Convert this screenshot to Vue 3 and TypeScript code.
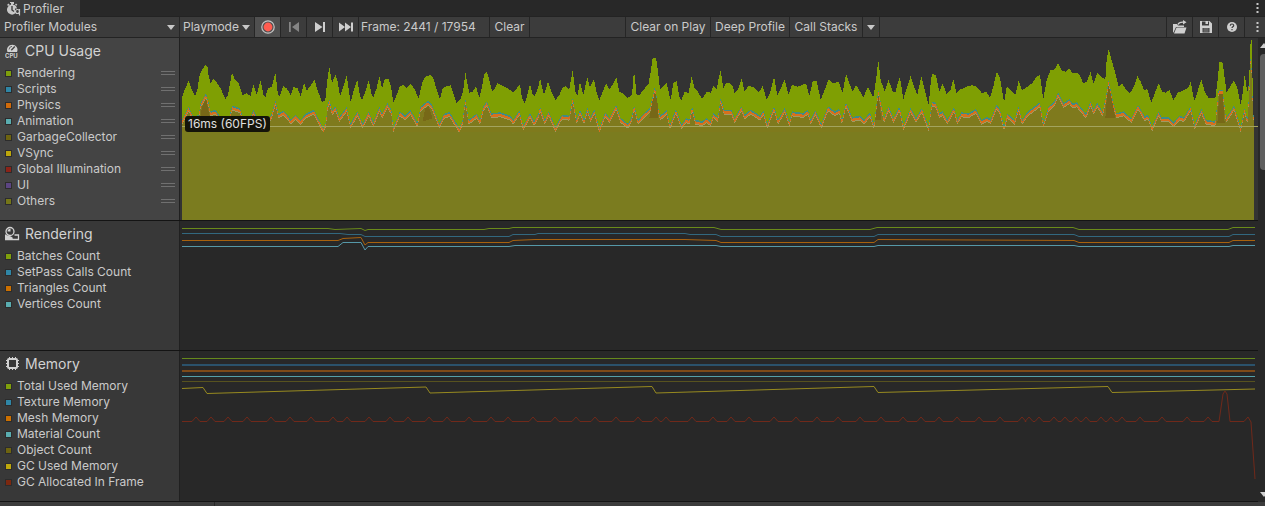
<script setup lang="ts">
import { ref } from 'vue'

interface Series {
  name: string
  color: string
  enabled: boolean
}

interface Line {
  color: string
  width: number
  points: string
}

const playMode = ref('Playmode')
const moduleMenu = ref('Profiler Modules')
const recording = ref(true)

const cpuSeries = ref<Series[]>([
  { name: 'Rendering', color: '#7f9f0c', enabled: true },
  { name: 'Scripts', color: '#2f86a6', enabled: true },
  { name: 'Physics', color: '#d06a0a', enabled: true },
  { name: 'Animation', color: '#5aadb0', enabled: true },
  { name: 'GarbageCollector', color: '#6e6410', enabled: true },
  { name: 'VSync', color: '#bda70c', enabled: true },
  { name: 'Global Illumination', color: '#8c2318', enabled: true },
  { name: 'UI', color: '#5c4583', enabled: true },
  { name: 'Others', color: '#757618', enabled: true },
])

const renderingSeries = ref<Series[]>([
  { name: 'Batches Count', color: '#7f9f0c', enabled: true },
  { name: 'SetPass Calls Count', color: '#2f86a6', enabled: true },
  { name: 'Triangles Count', color: '#cc7000', enabled: true },
  { name: 'Vertices Count', color: '#5aadb0', enabled: true },
])

const memorySeries = ref<Series[]>([
  { name: 'Total Used Memory', color: '#7f9f0c', enabled: true },
  { name: 'Texture Memory', color: '#2f86a6', enabled: true },
  { name: 'Mesh Memory', color: '#cc7000', enabled: true },
  { name: 'Material Count', color: '#5aadb0', enabled: true },
  { name: 'Object Count', color: '#6e6410', enabled: true },
  { name: 'GC Used Memory', color: '#bda70c', enabled: true },
  { name: 'GC Allocated In Frame', color: '#7c2810', enabled: true },
])

/* CPU samples are recorded in three blocks; x and y are thirds of a pixel. */
const blockStarts = [0, 1080, 2160]

const totalBlocks = [
  '6,172 14,150 26,122 36,150 46,168 52,150 58,108 66,90 76,76 82,78 86,108 92,132 100,115 110,128 122,145 136,178 144,165 150,130 156,98 164,118 176,130 188,165 200,160 212,168 220,132 230,165 242,120 250,165 256,172 264,145 276,140 286,97 294,165 300,168 310,138 320,145 332,165 340,142 352,143 362,168 372,128 380,152 390,140 404,118 412,150 420,170 426,188 436,180 442,120 448,80 456,130 466,104 472,120 480,168 490,140 500,106 508,160 512,186 520,155 532,120 540,168 546,180 556,155 566,120 574,160 580,172 590,145 598,108 606,145 614,118 626,116 634,145 640,188 650,165 660,138 670,135 680,145 692,132 704,148 716,176 726,130 736,110 750,105 760,115 770,150 780,178 788,145 800,138 812,136 822,165 830,190 842,178 850,150 856,97 864,140 868,158 878,155 888,140 898,172 906,140 912,105 920,95 928,120 936,155 944,145 952,130 970,138 984,145 1000,158 1010,145 1020,135 1026,175 1034,190 1042,165 1050,132 1058,165 1064,168 1074,145',
  '0,115 12,165 24,125 36,160 46,180 58,165 66,145 76,138 88,148 98,90 106,155 112,168 120,125 130,165 142,112 150,142 162,117 170,158 178,182 190,150 198,130 208,148 220,130 229,112 238,155 248,160 262,175 276,165 282,90 290,165 298,165 310,150 326,130 332,95 338,54 348,54 354,95 360,148 380,130 388,165 392,180 400,130 410,122 418,170 424,182 434,155 446,160 455,108 464,145 474,155 486,178 500,155 512,158 520,138 530,148 536,115 542,92 550,145 558,130 566,128 578,140 584,160 594,150 605,115 614,155 626,136 640,142 656,158 668,138 680,178 690,160 702,110 712,165 722,145 734,120 746,165 756,135 774,140 798,130 808,168 818,125 830,122 842,180 854,150 866,118 880,130 896,125 908,158 918,102 928,130 938,155 948,135 962,158 970,172 984,140 1000,172 1008,120 1015,62 1022,120 1034,155 1046,120 1058,155 1066,158 1076,120',
  '0,112 10,178 20,145 32,108 42,140 52,165 64,108 74,150 86,195 92,130 96,102 108,105 118,155 128,130 140,162 152,148 160,118 170,160 182,148 200,140 216,136 230,140 246,160 258,155 270,172 280,140 290,96 300,112 306,150 312,188 320,140 332,150 346,165 356,122 366,150 380,142 396,130 410,110 420,105 426,150 430,178 440,120 452,90 464,88 474,68 486,92 498,95 508,85 518,100 532,98 540,108 550,130 560,125 572,95 580,132 592,98 604,110 616,120 620,60 626,28 636,65 646,100 656,140 666,130 676,145 690,160 702,140 712,108 722,125 732,150 742,148 754,188 764,160 776,130 786,155 796,158 808,150 820,180 834,158 852,150 866,142 872,124 880,170 884,182 894,150 904,118 914,155 926,175 946,174 952,130 958,66 968,68 974,115 980,158 990,140 1002,122 1012,145 1022,195 1028,160 1034,105 1042,155 1047,130 1052,0 1055,0 1059,180 1063,345',
]

const scriptBlocks = [
  '6,240 26,200 40,232 56,225 62,190 78,160 86,190 92,215 106,210 116,225 136,250 150,225 156,198 180,205 188,232 210,238 220,210 234,240 262,238 274,225 286,183 296,222 310,212 322,225 332,240 346,225 362,240 378,222 402,210 414,235 430,265 438,245 442,200 448,178 456,212 466,200 478,232 500,202 512,252 532,215 548,252 566,215 580,248 598,202 606,222 622,190 634,210 640,262 660,215 676,228 692,212 712,248 722,200 744,183 756,195 778,252 792,222 808,217 838,265 848,240 856,178 866,240 890,222 900,240 910,200 920,185 934,220 960,218 990,228 1000,240 1018,212 1030,258 1050,220 1062,245 1076,220',
  '0,200 14,240 26,215 46,262 66,225 88,228 98,175 110,238 120,210 132,240 142,205 152,232 163,210 178,265 196,218 208,235 228,195 242,235 264,252 276,230 282,195 294,240 310,222 330,205 345,140 354,200 360,228 380,212 390,255 408,208 424,255 438,235 448,240 456,200 466,240 486,245 500,235 512,245 520,220 534,232 542,175 552,210 574,210 584,235 604,200 614,225 632,210 660,228 670,212 682,252 702,200 714,240 734,205 748,245 756,215 790,220 804,210 812,240 826,212 844,252 864,200 884,215 898,208 906,240 918,188 936,232 960,228 972,240 990,218 1002,255 1015,150 1032,235 1046,200 1060,235 1076,205',
  '0,205 10,258 32,205 48,235 66,205 76,235 86,260 96,185 108,190 118,220 128,215 142,240 162,202 172,240 184,218 206,220 228,208 244,240 260,232 272,238 290,195 300,210 312,260 322,222 344,240 356,200 366,240 384,215 420,188 430,250 446,200 464,185 474,158 490,190 508,178 518,192 530,188 558,222 572,185 580,210 592,190 608,215 618,170 626,120 640,190 650,220 670,215 694,235 714,195 734,230 744,225 756,262 776,215 784,232 804,232 820,248 838,228 852,232 872,200 884,255 904,208 918,240 946,245 956,150 968,150 978,235 1002,198 1022,262 1034,205 1042,240 1048,150 1053,20 1056,150 1060,200 1063,345',
]

function stackedArea(blocks: string[], drop: number): string {
  const points = blocks.flatMap((block, i) =>
    block.split(' ').map((pair) => {
      const [x, y] = pair.split(',').map(Number)
      return `${x + blockStarts[i]},${y + drop}`
    }),
  )
  return `6,540 ${points.join(' ')} 3223,540`
}

const cpuLayers = [
  { fill: '#7f9f03', points: stackedArea(totalBlocks, 0) },
  { fill: '#3f8c86', points: stackedArea(scriptBlocks, -1) },
  { fill: '#d8701c', points: stackedArea(scriptBlocks, 4) },
  { fill: '#a09a62', points: stackedArea(scriptBlocks, 11) },
  { fill: '#7f7a1d', points: stackedArea(scriptBlocks, 14) },
]

const collectorSpikes = [
  '62,230 66,200 78,176 84,205 92,240',
  '728,245 736,205 746,198 758,235',
  '1408,235 1416,190 1425,156 1433,190 1434,235',
  '2776,235 2780,180 2786,136 2796,180 2806,235',
  '3112,250 3118,162 3128,162 3134,250',
  '2086,240 2095,162 2104,240',
]

const renderingLines: Line[] = [
  { color: '#6a8a1a', width: 1, points: '2,7.5 148,7.5 155,8.5 181,7.5 185,9.5 188,8.5 304,8.5 309,7.5 329,7.5 333,6.5 534,6.5 541,8.5 690,8.5 697,6.5 893,6.5 899,8.5 1048,8.5 1053,6.5 1075,6.5' },
  { color: '#32687f', width: 1, points: '2,12.5 160,12.5 168,13.5 181,13.5 185,15.5 329,15.5 333,13.5 355,13.5 358,12.5 505,12.5 510,13.5 536,13.5 541,15.5 694,15.5 698,13.5 894,13.5 899,15.5 1049,15.5 1053,13.5 1075,13.5' },
  { color: '#a8620e', width: 1, points: '2,19.5 158,19.5 163,17.5 181,16.5 185,24 188,21.5 329,21.5 333,19.5 355,18.5 505,18.5 536,19.5 541,21.5 694,21.5 698,18.5 894,19.5 899,21.5 1049,21.5 1053,19.5 1075,19.5' },
  { color: '#5598a8', width: 1, points: '2,25.5 158,25.5 163,21.5 181,21.5 185,29 188,25.5 329,25.5 335,24.5 536,24.5 541,25.5 694,25.5 698,24.5 894,24.5 899,25.5 1049,25.5 1053,24.5 1075,24.5' },
]

const allocationTicks = [
  16, 31, 48, 67, 91, 110, 131, 153, 167, 189, 210, 228, 249, 267, 289, 311, 328, 353, 375, 396, 415, 436, 458, 476,
  486, 512, 533, 551, 569, 594, 616, 637, 658, 680, 701, 723, 741, 759, 777, 799, 820, 842, 849, 859, 874, 885, 896,
  906, 921, 931, 942, 960, 982, 1007, 1028,
]

const allocationPoints = [
  '2,70.5',
  ...allocationTicks.map((x) => `${x - 4},70.5 ${x},66 ${x + 4},70.5`),
  '1039,70.5 1043,43 1045,40 1047,43 1050,70.5 1064,70.5 1068,66 1071,71 1075,128',
].join(' ')

const memoryLines: Line[] = [
  { color: '#66891c', width: 1, points: '2,7.5 1075,7.5' },
  { color: '#2b526b', width: 2, points: '2,14 1075,14' },
  { color: '#7e4a18', width: 2, points: '2,20 1075,20' },
  { color: '#54a0aa', width: 1, points: '2,25.5 1075,25.5' },
  { color: '#57521f', width: 1, points: '2,30.5 1075,30.5' },
  { color: '#978a20', width: 1, points: '2,37.5 23,36.5 27,42.5 246,36 250,42 472,35.5 476,42 694,35.5 698,41.5 928,35.5 932,41.5 1075,38' },
  { color: '#70291a', width: 1, points: allocationPoints },
]

const modules = ref([
  { id: 'cpu', title: 'CPU Usage', series: cpuSeries.value, draggable: true },
  { id: 'rendering', title: 'Rendering', series: renderingSeries.value, draggable: false },
  { id: 'memory', title: 'Memory', series: memorySeries.value, draggable: false },
])
</script>

<template>
  <main class="profiler">
    <header class="tabs">
      <button class="tab" type="button">
        <svg class="tab-icon" width="15" height="14" viewBox="0 0 15 14" aria-hidden="true">
          <path d="M4 0h4v2h-1v1h-2v-2h-1z" fill="#c8c8c8" />
          <path d="M1 3l1.500-1.500 1.200 1.200-1.400 1.400zM9 2.500l1-1 1.300 1.300-1 1z" fill="#c8c8c8" />
          <path d="M6 2.600a5 5 0 1 0 3 9v-5h2a5 5 0 0 0-5-4z" fill="#c8c8c8" />
          <path d="M6 4v4l2 1.500" fill="none" stroke="#3c3c3c" stroke-width="1.400" />
          <circle cx="11.500" cy="9.500" r="2" fill="#3c3c3c" stroke="#c8c8c8" stroke-width="1.200" />
          <path d="M13.500 7v6.500" stroke="#c8c8c8" stroke-width="1.200" />
        </svg>
        <span>Profiler</span>
      </button>
      <button class="more" type="button" aria-label="Window options">
        <svg width="3" height="11" viewBox="0 0 3 11" aria-hidden="true">
          <path d="M.5 0h2v2h-2zM.5 4h2v2h-2zM.5 8h2v2h-2z" fill="#c8c8c8" />
        </svg>
      </button>
    </header>

    <nav class="toolbar" aria-label="Profiler controls">
      <label class="picker modules-picker">
        <select v-model="moduleMenu" aria-label="Profiler modules">
          <option>Profiler Modules</option>
        </select>
        <i class="caret"></i>
      </label>
      <label class="picker mode-picker">
        <select v-model="playMode" aria-label="Target">
          <option>Playmode</option>
          <option>Editmode</option>
        </select>
        <i class="caret"></i>
      </label>
      <button class="tool" :class="{ active: recording }" type="button" aria-label="Record" @click="recording = !recording">
        <svg width="14" height="14" viewBox="0 0 14 14" aria-hidden="true">
          <circle cx="7" cy="7" r="6.200" fill="none" stroke="#c4c4c4" stroke-width="1.200" />
          <circle cx="7" cy="7" r="4.400" fill="#ff5c50" />
        </svg>
      </button>
      <button class="tool" type="button" aria-label="Previous frame" disabled>
        <svg width="12" height="12" viewBox="0 0 12 12" aria-hidden="true">
          <path d="M1 1h1.800v10h-1.800zM11 1v10l-7-5z" fill="#858585" />
        </svg>
      </button>
      <button class="tool" type="button" aria-label="Next frame">
        <svg width="12" height="12" viewBox="0 0 12 12" aria-hidden="true">
          <path d="M1 1l7.500 5-7.500 5zM9 1h2v10h-2z" fill="#cfcfcf" />
        </svg>
      </button>
      <button class="tool" type="button" aria-label="Current frame">
        <svg width="16" height="12" viewBox="0 0 16 12" aria-hidden="true">
          <path d="M1 1.500l6 4.500-6 4.500zM7 1.500l6 4.500-6 4.500zM13 1.500h2v9h-2z" fill="#cfcfcf" />
        </svg>
      </button>
      <span class="frame">Frame: 2441 / 17954</span>
      <button class="text-tool clear" type="button">Clear</button>
      <span class="gap"></span>
      <button class="text-tool clear-on-play" type="button">Clear on Play</button>
      <button class="text-tool deep" type="button">Deep Profile</button>
      <button class="text-tool stacks" type="button">Call Stacks</button>
      <button class="stacks-menu" type="button" aria-label="Call stack options"><i class="caret"></i></button>
      <span class="fill"></span>
      <button class="tool" type="button" aria-label="Load profile">
        <svg width="15" height="14" viewBox="0 0 15 14" aria-hidden="true">
          <path d="M1 4h4l1 1.500h6v1.500h-8l-2.500 5.500h-.5z" fill="#cfcfcf" />
          <path d="M4.500 7.500h10l-2 6h-10.500z" fill="#cfcfcf" />
          <path d="M6 4.500c1-2.500 3-2.500 6-2.200" fill="none" stroke="#cfcfcf" stroke-width="1.300" />
          <path d="M11 0l3.500 2.300-3.500 2.300z" fill="#cfcfcf" />
        </svg>
      </button>
      <button class="tool" type="button" aria-label="Save profile">
        <svg width="14" height="14" viewBox="0 0 14 14" aria-hidden="true">
          <path fill-rule="evenodd" d="M1 1h9.500l2.500 2.500v9.500h-12zM3 1.500v4h7v-4h-1v2.500h-2.500v-2.500zM3.500 8v4.500h7v-4.500z" fill="#cfcfcf" />
          <path d="M4.500 9h5M4.500 11h5" stroke="#8c8c8c" />
        </svg>
      </button>
      <button class="tool" type="button" aria-label="Help">
        <svg width="12" height="12" viewBox="0 0 12 12" aria-hidden="true">
          <circle cx="6" cy="6" r="5" fill="#cfcfcf" />
          <path d="M4.300 4.700c0-2.300 3.400-2.200 3.400-.2 0 1.300-1.700 1.200-1.700 2.500" fill="none" stroke="#3c3c3c" stroke-width="1.200" />
          <path d="M5.400 8h1.200v1.200h-1.200z" fill="#3c3c3c" />
        </svg>
      </button>
      <button class="more toolbar-more" type="button" aria-label="Profiler options">
        <svg width="3" height="11" viewBox="0 0 3 11" aria-hidden="true">
          <path d="M.5 0h2v2h-2zM.5 4h2v2h-2zM.5 8h2v2h-2z" fill="#c8c8c8" />
        </svg>
      </button>
    </nav>

    <div class="body">
      <div class="modules">
        <section v-for="module in modules" :key="module.id" class="module" :class="module.id">
          <div class="legend">
            <h2>
              <svg v-if="module.id === 'cpu'" width="15" height="15" viewBox="0 0 15 15" aria-hidden="true">
                <path d="M2.500 9a5.200 5.200 0 1 1 9.500 0z" fill="#d2d2d2" />
                <path d="M6.300 7.200l3.500-3.700" stroke="#444" stroke-width="1.400" />
                <path d="M4 6.500a3.500 3.500 0 0 1 3-3.200" fill="none" stroke="#444" stroke-width=".8" />
                <text x="0" y="15" class="icon-text">CPU</text>
              </svg>
              <svg v-else-if="module.id === 'rendering'" width="15" height="15" viewBox="0 0 15 15" aria-hidden="true">
                <circle cx="5" cy="5.500" r="4" fill="none" stroke="#d2d2d2" stroke-width="1.300" />
                <path d="M2.500 5.500a3 3 0 0 1 3-2.800v2.800z" fill="#d2d2d2" />
                <path d="M.5 8.500v5h13v-4.500h-4" fill="none" stroke="#d2d2d2" stroke-width="1.300" />
                <path d="M1 9l5 1.500 2 1.500-1 1.500h-6z" fill="#d2d2d2" />
              </svg>
              <svg v-else width="15" height="15" viewBox="0 0 15 15" aria-hidden="true">
                <rect x="3" y="3" width="9" height="9" rx="1" fill="none" stroke="#d2d2d2" stroke-width="2" />
                <path d="M4.500 1v2M7.500 1v2M10.500 1v2M4.500 12v2M7.500 12v2M10.500 12v2M1 4.500h2M1 7.500h2M1 10.500h2M12 4.500h2M12 7.500h2M12 10.500h2" stroke="#d2d2d2" />
              </svg>
              <span>{{ module.title }}</span>
            </h2>
            <ul>
              <li v-for="item in module.series" :key="item.name">
                <label>
                  <input v-model="item.enabled" type="checkbox" :style="{ backgroundColor: item.color }" />
                  <span>{{ item.name }}</span>
                </label>
                <i v-if="module.draggable" class="handle"></i>
              </li>
            </ul>
          </div>

          <div class="chart">
            <svg v-if="module.id === 'cpu'" viewBox="0 -6 3234 546" preserveAspectRatio="none" shape-rendering="crispEdges" role="img" aria-label="CPU usage chart">
              <polygon v-for="layer in cpuLayers" :key="layer.fill" :points="layer.points" :fill="layer.fill" />
              <polygon v-for="spike in collectorSpikes" :key="spike" :points="spike" fill="#776817" />
              <path d="M6 275H3223V540H6z" fill="#7b7c1f" />
              <path d="M6 259.500H3234" stroke="#a3a45e" stroke-width="3" />
            </svg>
            <svg v-else-if="module.id === 'rendering'" viewBox="0 0 1078 129" preserveAspectRatio="none" role="img" aria-label="Rendering chart">
              <polyline v-for="line in renderingLines" :key="line.color" :points="line.points" :stroke="line.color" :stroke-width="line.width" fill="none" />
            </svg>
            <svg v-else viewBox="0 0 1078 150" preserveAspectRatio="none" role="img" aria-label="Memory chart">
              <polyline v-for="line in memoryLines" :key="line.color" :points="line.points" :stroke="line.color" :stroke-width="line.width" fill="none" />
            </svg>
            <span v-if="module.id === 'cpu'" class="marker">16ms (60FPS)</span>
          </div>
        </section>
      </div>
      <div class="scrollbar" aria-hidden="true">
        <i class="arrow up"></i>
        <i class="thumb"></i>
        <i class="arrow down"></i>
      </div>
    </div>
    <footer class="details"><span></span></footer>
  </main>
</template>

<style>
body {
  background: #383838;
  overflow: hidden;
}
</style>

<style scoped>
.profiler {
  color: #cacaca;
  font-family: Inter, "Liberation Sans", sans-serif;
  font-size: 12px;
  line-height: 16px;
}

button,
select {
  appearance: none;
  margin: 0;
  padding: 0;
  border: 0;
  border-radius: 0;
  background: none;
  color: inherit;
  font: inherit;
  outline: 0;
}

button {
  display: flex;
  align-items: center;
  justify-content: center;
}

svg {
  display: block;
  flex: none;
}

.tabs {
  display: flex;
  justify-content: space-between;
  height: 16px;
  background: #282828;
}

.tab {
  width: 80px;
  height: 17px;
  justify-content: flex-start;
  gap: 2px;
  padding-left: 6px;
  background: #3c3c3c;
}

.more {
  width: 16px;
}

.toolbar {
  display: flex;
  box-sizing: border-box;
  height: 22px;
  border-top: 1px solid #232323;
  border-bottom: 1px solid #232323;
  background: #3c3c3c;
  white-space: nowrap;
}

.toolbar > * {
  flex: none;
  box-sizing: border-box;
  border-left: 1px solid #262626;
}

.picker {
  display: flex;
  align-items: center;
  justify-content: space-between;
}

.picker select {
  flex: 1;
  min-width: 0;
  height: 20px;
}

.toolbar .modules-picker {
  width: 179px;
  padding: 0 4px;
  border-left: 0;
}

.mode-picker {
  width: 75px;
  padding: 0 4px 0 3px;
}

.caret {
  width: 0;
  border: 4px solid transparent;
  border-top: 5px solid #c8c8c8;
  border-bottom: 0;
}

.tool {
  width: 26px;
}

.tool.active {
  background: #505050;
}

.frame {
  width: 131px;
  padding-left: 2px;
  line-height: 20px;
}

.clear {
  width: 40px;
}

.gap {
  width: 96px;
}

.clear-on-play {
  width: 85px;
}

.deep {
  width: 79px;
}

.stacks {
  width: 73px;
}

.stacks-menu {
  width: 17px;
}

.toolbar .fill {
  flex: 1;
}

.toolbar-more {
  width: 21px;
  padding-left: 4px;
}

.body {
  display: flex;
}

.modules {
  flex: 1;
  min-width: 0;
}

.module {
  display: grid;
  grid-template-columns: 180px 1fr;
  border-bottom: 1px solid #141414;
}

.legend {
  background: #383838;
  border-right: 1px solid #202020;
}

.cpu .legend {
  min-height: 182px;
  background: #444;
}

.rendering .legend {
  min-height: 129px;
}

.memory .legend {
  min-height: 150px;
}

h2 {
  display: flex;
  align-items: center;
  gap: 5px;
  box-sizing: border-box;
  height: 27px;
  margin: 0;
  padding: 0 0 2px 5px;
  color: #d2d2d2;
  font-size: 14px;
  font-weight: 400;
}

.icon-text {
  fill: #d2d2d2;
  font-size: 6px;
  font-weight: 700;
}

ul {
  margin: 0;
  padding: 0;
  list-style: none;
}

li {
  display: flex;
  align-items: center;
  justify-content: space-between;
  height: 16px;
  padding: 0 4px 0 5px;
}

label {
  display: flex;
  align-items: center;
}

li label {
  gap: 5px;
}

input {
  appearance: none;
  width: 7px;
  height: 7px;
  margin: 0;
  border: 1px solid #2c2c2c;
}

.handle {
  box-sizing: border-box;
  width: 14px;
  height: 4px;
  border-top: 1px solid #707070;
  border-bottom: 1px solid #707070;
}

.chart {
  position: relative;
  min-width: 0;
  background: #282828;
}

.cpu .chart {
  background: #333;
}

.chart svg {
  width: 100%;
  height: 100%;
}

.marker {
  position: absolute;
  left: 5px;
  top: 78px;
  padding: 0 3px;
  border-radius: 3px;
  background: #14140a;
  color: #e0e0e0;
}

.scrollbar {
  display: flex;
  flex-direction: column;
  align-items: flex-end;
  box-sizing: border-box;
  width: 7px;
  padding: 5px 0;
  overflow: hidden;
  background: #282828;
}

.arrow {
  width: 0;
  margin-right: -3px;
  border: 4px solid transparent;
}

.up {
  border-top: 0;
  border-bottom: 5px solid #d0d0d0;
}

.down {
  margin-top: auto;
  border-top: 5px solid #d0d0d0;
  border-bottom: 0;
}

.thumb {
  width: 5px;
  height: 116px;
  margin-top: 6px;
  border-radius: 4px 0 0 4px;
  background: #5f5f5f;
}

.details {
  display: flex;
  height: 4px;
  background: #3c3c3c;
}

.details span {
  width: 214px;
  border-right: 1px solid #282828;
}
</style>
